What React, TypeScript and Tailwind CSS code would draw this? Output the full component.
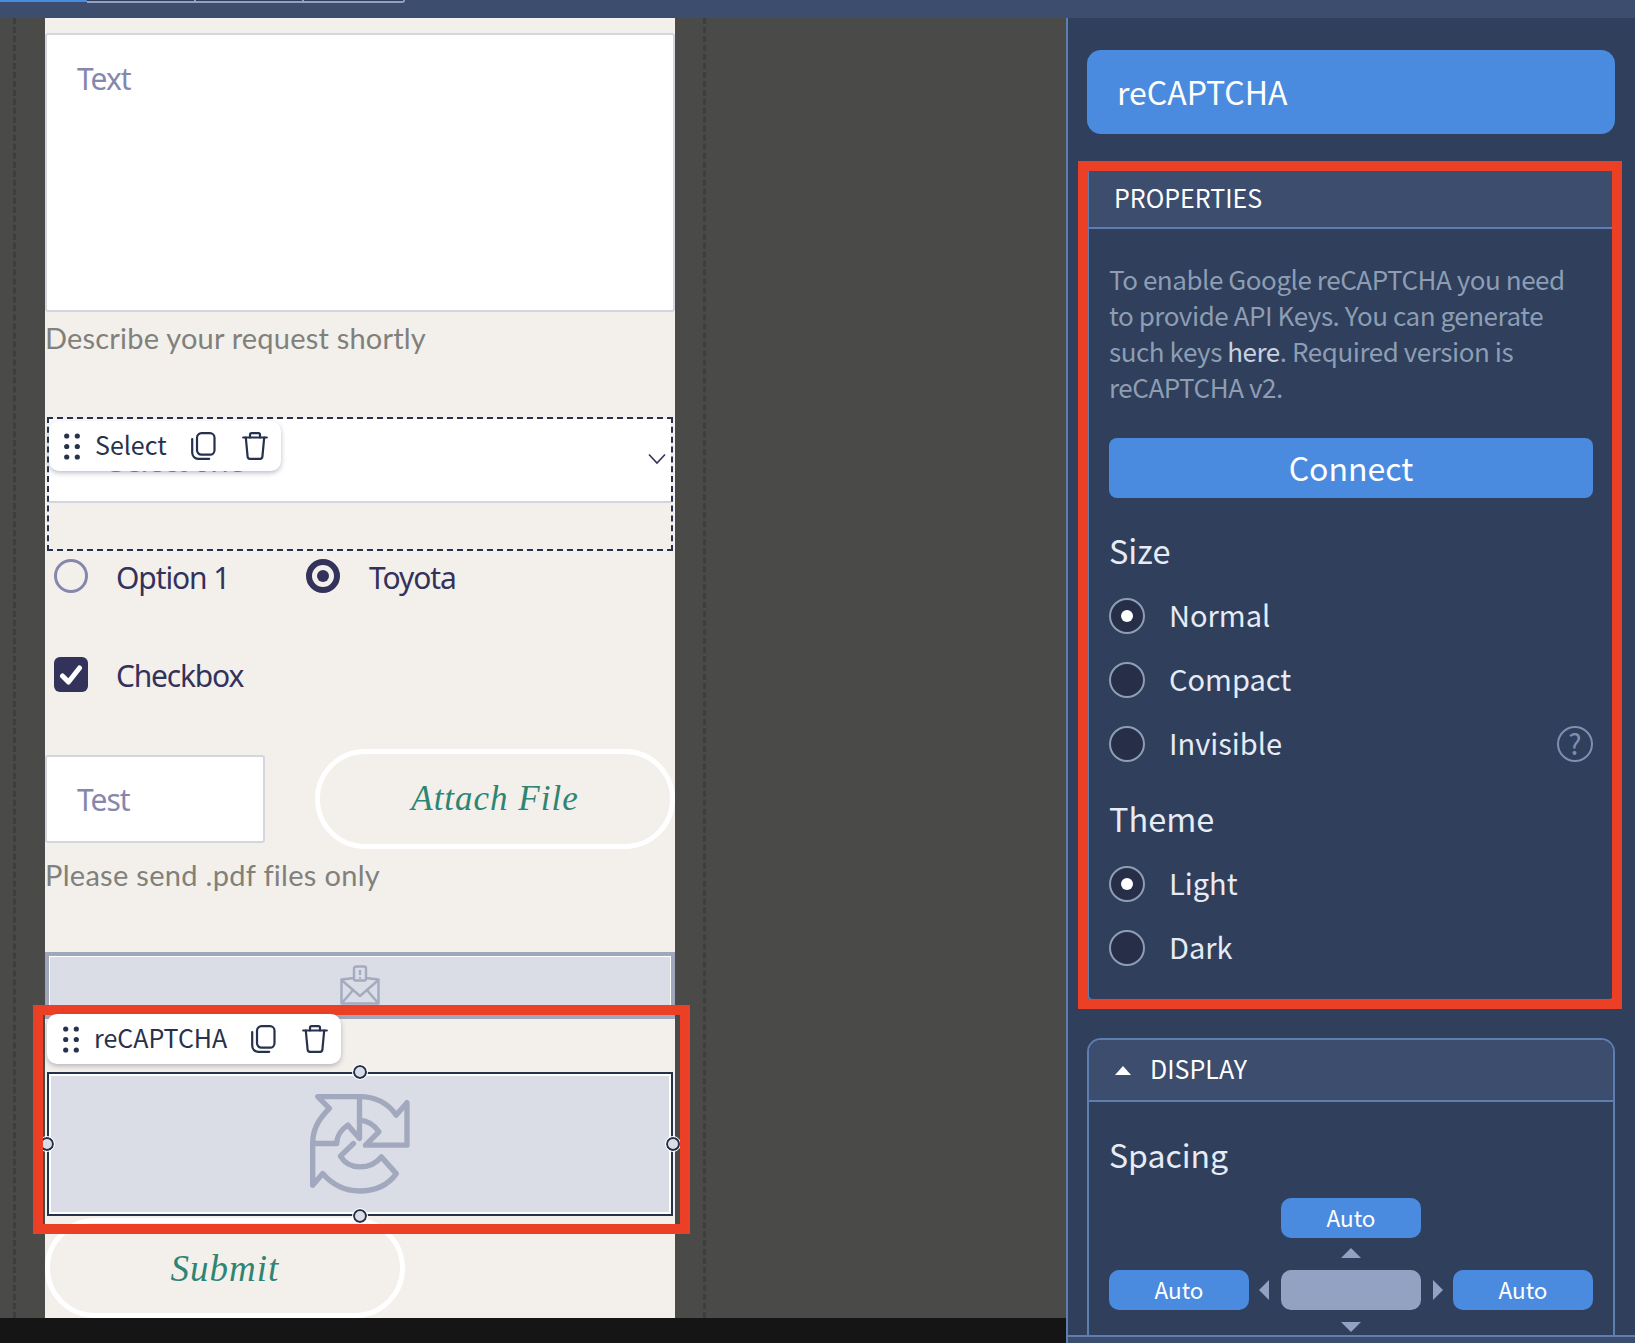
import React from 'react';

const panelFont = "font-['Noto_Sans_CJK_SC',sans-serif]";
const formFont = "font-['Noto_Sans',sans-serif]";
const hintFont = "font-['Lato',sans-serif]";
const btnFont = "font-['Liberation_Serif',serif]";

const GripIcon: React.FC = () => (
  <svg width="16" height="27" viewBox="0 0 16 27" fill="#27314d">
    <circle cx="2.7" cy="3" r="2.6" />
    <circle cx="13.3" cy="3" r="2.6" />
    <circle cx="2.7" cy="13.5" r="2.6" />
    <circle cx="13.3" cy="13.5" r="2.6" />
    <circle cx="2.7" cy="24" r="2.6" />
    <circle cx="13.3" cy="24" r="2.6" />
  </svg>
);

const CopyIcon: React.FC = () => (
  <svg width="25" height="28" viewBox="0 0 25 28" fill="none" stroke="#27314d" strokeWidth="2.2" strokeLinecap="round">
    <rect x="6" y="1.2" width="17.5" height="21.5" rx="4.5" />
    <path d="M1.2 7v13.5c0 3.5 2.5 6.3 6 6.3h11" />
  </svg>
);

const TrashIcon: React.FC = () => (
  <svg width="26" height="28" viewBox="0 0 26 28" fill="none" stroke="#27314d" strokeWidth="2.2" strokeLinecap="round" strokeLinejoin="round">
    <path d="M1.2 5.5h23.6" />
    <path d="M8 5.5V2.8c0-.9.7-1.6 1.6-1.6h6.8c.9 0 1.6.7 1.6 1.6v2.7" />
    <path d="M3.8 5.5l1.8 19.2c.1 1.2 1 2.1 2.2 2.1h10.4c1.2 0 2.1-.9 2.2-2.1l1.8-19.2" />
  </svg>
);

const Toolbar: React.FC<{ label: string; className: string }> = ({ label, className }) => (
  <div className={`absolute z-10 flex items-center bg-white rounded-[10px] shadow-[0_2px_5px_rgba(60,70,100,0.35)] ${className}`}>
    <GripIcon />
    <span className={`ml-[15px] pb-[3px] text-[25px] leading-none text-[#27314d] ${panelFont}`}>{label}</span>
    <span className="ml-[24px]"><CopyIcon /></span>
    <span className="ml-[26px]"><TrashIcon /></span>
  </div>
);

const Handle: React.FC<{ className: string }> = ({ className }) => (
  <div className={`absolute w-[14px] h-[14px] rounded-full bg-[#dadde5] border-[2.5px] border-[#27314d] outline outline-1 outline-white ${className}`} />
);

const SideRadio: React.FC<{ label: string; on?: boolean; help?: boolean }> = ({ label, on, help }) => (
  <div className="flex items-center h-[36px]">
    <div className="w-[36px] h-[36px] rounded-full bg-[#262f47] border-2 border-[#8d9db3] flex items-center justify-center">
      {on && <div className="w-[12px] h-[12px] rounded-full bg-white" />}
    </div>
    <span className={`ml-[24px] pb-[3px] text-[29px] leading-none text-[#e6ebf5] ${panelFont}`}>{label}</span>
    {help && (
      <div className={`ml-auto w-[36px] h-[36px] rounded-full border-2 border-[#7d90b2] flex items-center justify-center pb-[2px] text-[28px] leading-none text-[#7d90b2] ${panelFont}`}>?</div>
    )}
  </div>
);

const AutoBtn: React.FC = () => (
  <div className={`w-[140px] h-[40px] rounded-[10px] bg-[#4a8bdf] flex items-center justify-center pb-[1px] text-[22.5px] leading-none text-white ${panelFont}`}>Auto</div>
);

export default function App() {
  return (
    <div className="relative w-[1635px] h-[1343px] overflow-hidden flex flex-col bg-[#2f3f5c]">
      {/* top strip */}
      <div className="h-[18px] shrink-0 bg-[#3d4d6d] flex items-start">
        <div className="w-[87px] h-[2px] bg-[#4a8bdf]" />
        <div className="w-[109px] h-[3px] border-b-2 border-r-2 border-[#93a2c2] bg-[#2f3f5c]" />
        <div className="w-[108px] h-[3px] border-b-2 border-r-2 border-[#93a2c2] bg-[#2f3f5c]" />
        <div className="w-[101px] h-[3px] border-b-2 border-r-2 border-[#93a2c2] bg-[#2f3f5c] rounded-br-[6px]" />
      </div>

      <div className="flex flex-1 min-h-0">
        {/* canvas */}
        <div className="w-[1066px] shrink-0 flex flex-col bg-[#4a4a48]">
          <div className="flex-1 min-h-0 ml-[13px] w-[693px] border-x-[3px] border-dashed border-[#3e3e3d] pl-[29px]">
            <div className="w-[630px] h-full bg-[#f3f0eb] pt-[15px]">
              <div className={`h-[279px] bg-white border-2 border-[#d3d6dc] rounded-[3px] pl-[30px] pt-[24px] text-[30px] leading-[40px] tracking-[-1px] text-[#8587ad] ${formFont}`}>Text</div>
              <div className={`h-[40px] mt-[6px] text-[29px] leading-[40px] tracking-[0.2px] text-[#80807c] ${hintFont}`}>Describe your request shortly</div>

              {/* selected select */}
              <div className="relative h-[134px] mt-[59px] mx-[2px] border-2 border-dashed border-[#27314d]">
                <div className="relative h-[84px] bg-white border-b-2 border-[#d3d6dc]">
                  <span className={`absolute left-[60px] top-[22px] text-[30px] leading-[40px] tracking-[-1px] text-[#8587ad] ${formFont}`}>Select one</span>
                  <svg className="absolute right-[5px] top-[34px]" width="18" height="12" viewBox="0 0 18 12" fill="none" stroke="#33325b" strokeWidth="1.6"><path d="M1 1.5l8 8.5 8-8.5" /></svg>
                </div>
                <Toolbar label="Select" className="left-[0px] top-[2px] w-[232px] h-[50px] pl-[15px]" />
              </div>

              {/* radios */}
              <div className={`flex items-center h-[34px] mt-[8px] pl-[9px] text-[30px] leading-none tracking-[-1.1px] text-[#33325b] ${formFont}`}>
                <div className="w-[34px] h-[34px] rounded-full border-[3px] border-[#8587ad]" />
                <span className="ml-[28px] mt-[4px] w-[190px]">Option 1</span>
                <div className="w-[34px] h-[34px] rounded-full border-[6px] border-[#33325b] flex items-center justify-center">
                  <div className="w-[12px] h-[12px] rounded-full bg-[#33325b]" />
                </div>
                <span className="ml-[29px] mt-[4px]">Toyota</span>
              </div>

              <div className={`flex items-center h-[35px] mt-[64px] pl-[9px] text-[30px] leading-none tracking-[-1.2px] text-[#33325b] ${formFont}`}>
                <div className="w-[34px] h-[35px] rounded-[6px] bg-[#33325b] flex items-center justify-center">
                  <svg width="24" height="22" viewBox="0 0 24 22" fill="none" stroke="#fff" strokeWidth="5" strokeLinecap="round" strokeLinejoin="round"><path d="M3.5 12l6 6L20.5 4" /></svg>
                </div>
                <span className="ml-[28px] mt-[2px]">Checkbox</span>
              </div>

              {/* file row */}
              <div className="flex items-center justify-between h-[100px] mt-[57px]">
                <div className={`w-[220px] h-[88px] bg-white border-2 border-[#d3d6dc] rounded-[3px] pl-[30px] pt-[2px] flex items-center text-[30px] leading-none tracking-[-1px] text-[#8587ad] ${formFont}`}>Test</div>
                <div className={`w-[360px] h-[100px] rounded-full border-[5px] border-white flex items-center justify-center pb-[1px] text-[35px] italic leading-none tracking-[1px] text-[#2f8472] ${btnFont}`}>Attach File</div>
              </div>
              <div className={`h-[40px] mt-[6px] text-[29px] leading-[40px] tracking-[0.3px] text-[#80807c] ${hintFont}`}>Please send .pdf files only</div>

              {/* newsletter block */}
              <div className="h-[67px] mt-[57px] border-[4px] border-[#a0a7ba] bg-white p-[1px]">
                <div className="h-full bg-[#dadde5] flex justify-center pt-[8px]">
                  <svg width="40" height="40" viewBox="0 0 40 40" fill="none" stroke="#a4abbf" strokeWidth="2.4" strokeLinejoin="round">
                    <rect x="14" y="1.5" width="12" height="14" rx="2" />
                    <path d="M20 5v5M20 12v1.5" />
                    <path d="M14 13L1.5 14.5V38.5H38.5V14.5L26 13" />
                    <path d="M1.5 15L20 31L38.5 15M1.5 38.5L14 24M38.5 38.5L26 24" />
                  </svg>
                </div>
              </div>

              {/* selected recaptcha */}
              <div className="relative h-[144px] mt-[53px] mx-[2px] border-2 border-[#27314d] bg-white p-[2px]">
                <div className="h-full bg-[#dadde5] flex items-center justify-center pb-[2px] pr-[2px]">
                  <svg width="107" height="107" viewBox="80 60 320 320" fill="none" stroke="#a2a9be" strokeWidth="16" strokeLinejoin="round" strokeLinecap="round">
                    <path d="M100 220H172C172 195 190 175 205 165L240 205V80H115L150 115C120 145 100 175 100 220Z" />
                    <path d="M240 80C290 80 325 100 350 135L382 98V225H258L298 185C285 165 265 152 240 150" />
                    <path d="M100 220V345L130 310C160 345 195 362 240 362C290 362 325 345 350 310L305 260C290 280 265 290 240 290C215 290 195 278 183 258L222 220" />
                  </svg>
                </div>
                <Handle className="left-1/2 -translate-x-1/2 -top-[9px]" />
                <Handle className="left-1/2 -translate-x-1/2 -bottom-[9px]" />
                <Handle className="-left-[9px] top-1/2 -translate-y-1/2" />
                <Handle className="-right-[9px] top-1/2 -translate-y-1/2" />
                <Toolbar label="reCAPTCHA" className="left-[-2px] top-[-60px] w-[294px] h-[50px] pl-[16px]" />
              </div>

              <div className={`w-[360px] h-[100px] mt-[2px] rounded-full border-[5px] border-white flex items-center justify-center text-[37px] italic leading-none tracking-[1px] text-[#2f8472] ${btnFont}`}>Submit</div>
            </div>
          </div>
          <div className="relative h-[25px] shrink-0 bg-[#151515]" />
        </div>

        {/* side panel */}
        <div className={`flex-1 min-w-0 flex flex-col border-l-2 border-[#5e7db0] ${panelFont}`}>
          <div className="flex-1 min-h-0 overflow-hidden pt-[32px] pl-[19px] pr-[20px]">
            <div className="h-[84px] rounded-[14px] bg-[#4a8bdf] pl-[30px] pb-[3px] flex items-center text-[32px] leading-none text-white">reCAPTCHA</div>

            <div className="mt-[37px] h-[830px] border-x-2 border-b-2 border-[#5e7db0] rounded-b-[6px]">
              <div className="h-[58px] bg-[#3d4d6d] border-b-2 border-[#5e7db0] pl-[25px] pb-[4px] flex items-center text-[25px] leading-none text-white">PROPERTIES</div>
              <div className="pl-[20px] pr-[20px] pt-[32px]">
                <p className="text-[26px] leading-[36px] tracking-[-0.45px] text-[#8d9db3]">
                  To enable Google reCAPTCHA you need<br />
                  to provide API Keys. You can generate<br />
                  such keys <span className="text-[#c9d2e0]">here</span>. Required version is<br />
                  reCAPTCHA v2.
                </p>
                <div className="mt-[33px] h-[60px] rounded-[8px] bg-[#4a8bdf] flex items-center justify-center pb-[3px] text-[32px] leading-none text-white">Connect</div>
                <div className="mt-[32px] h-[44px] pb-[3px] flex items-center text-[32.5px] leading-none text-[#e6ebf5]">Size</div>
                <div className="mt-[24px] flex flex-col gap-[28px]">
                  <SideRadio label="Normal" on />
                  <SideRadio label="Compact" />
                  <SideRadio label="Invisible" help />
                </div>
                <div className="mt-[36px] h-[44px] pb-[3px] flex items-center text-[32.5px] leading-none text-[#e6ebf5]">Theme</div>
                <div className="mt-[24px] flex flex-col gap-[28px]">
                  <SideRadio label="Light" on />
                  <SideRadio label="Dark" />
                </div>
              </div>
            </div>

            <div className="mt-[37px] rounded-t-[14px] border-2 border-b-0 border-[#5e7db0] h-[400px]">
              <div className="h-[62px] rounded-t-[12px] bg-[#3d4d6d] border-b-2 border-[#5e7db0] pl-[26px] flex items-center text-[25px] leading-none text-white">
                <svg width="16" height="9" viewBox="0 0 16 9" fill="#fff"><path d="M8 0l8 9H0z" /></svg>
                <span className="ml-[19px] pb-[3px]">DISPLAY</span>
              </div>
              <div className="pl-[20px] pr-[20px] pt-[28px]">
                <div className="h-[48px] flex items-center text-[32px] leading-none text-[#e6ebf5]">Spacing</div>
                <div className="mt-[20px] flex flex-col items-center">
                  <AutoBtn />
                  <svg className="mt-[10px]" width="20" height="10" viewBox="0 0 20 10" fill="#93a2c2"><path d="M10 0l10 10H0z" /></svg>
                  <div className="mt-[12px] flex items-center">
                    <AutoBtn />
                    <svg className="ml-[10px]" width="10" height="20" viewBox="0 0 10 20" fill="#93a2c2"><path d="M10 0v20L0 10z" /></svg>
                    <div className="ml-[12px] w-[140px] h-[40px] rounded-[10px] bg-[#93a2c2]" />
                    <svg className="ml-[12px]" width="10" height="20" viewBox="0 0 10 20" fill="#93a2c2"><path d="M0 0v20l10-10z" /></svg>
                    <div className="ml-[10px]"><AutoBtn /></div>
                  </div>
                  <svg className="mt-[12px]" width="20" height="10" viewBox="0 0 20 10" fill="#93a2c2"><path d="M0 0h20L10 10z" /></svg>
                </div>
              </div>
            </div>
          </div>
          <div className="h-[8px] shrink-0 bg-[#3d4d6d] border-t-2 border-[#5e7db0]" />
        </div>
      </div>

      {/* red annotation boxes */}
      <div className="absolute left-[33px] top-[1005px] w-[657px] h-[229px] border-[10px] border-[#ec4026] pointer-events-none" />
      <div className="absolute left-[1078px] top-[161px] w-[544px] h-[848px] border-[10px] border-[#ec4026] pointer-events-none" />
    </div>
  );
}
